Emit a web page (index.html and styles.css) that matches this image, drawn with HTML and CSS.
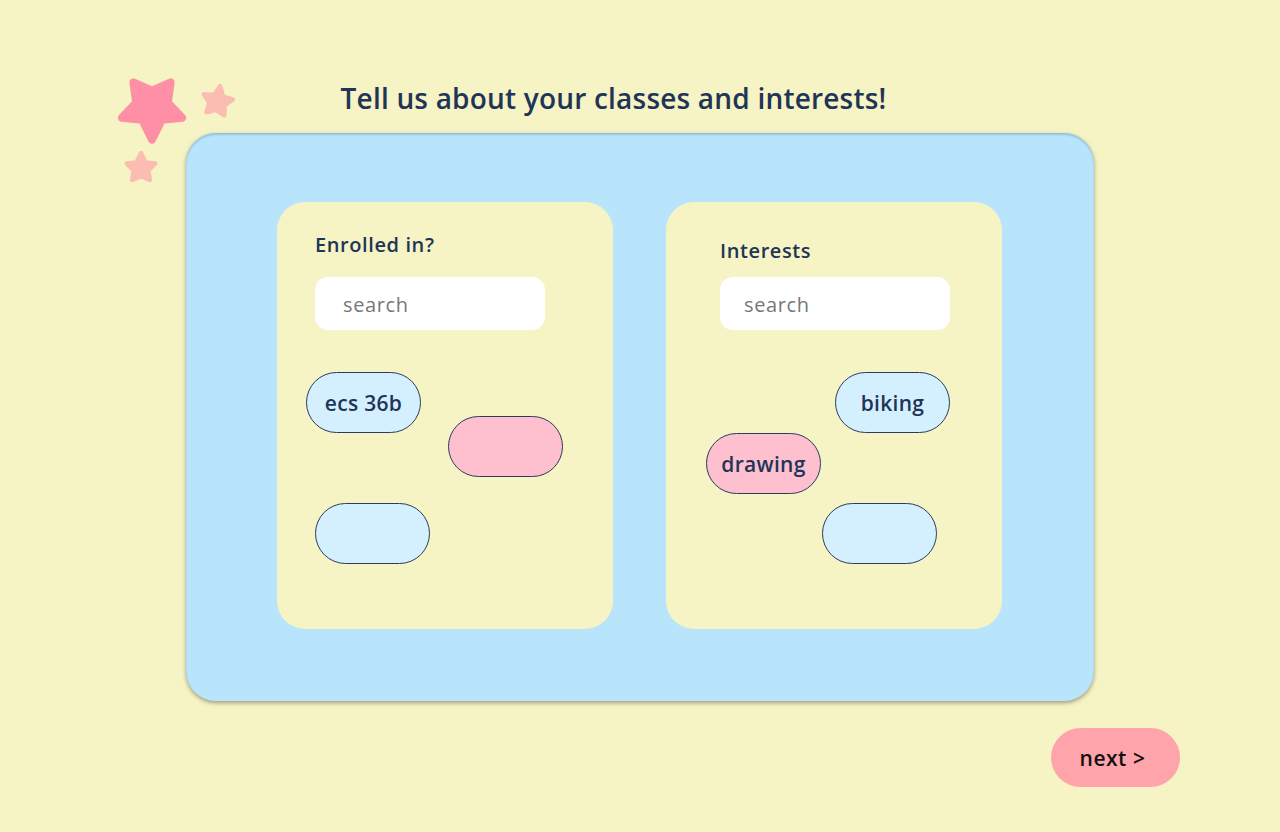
FILE: index.html
```html
<!DOCTYPE html>
<html lang="en">
<head>
<meta charset="utf-8">
<title>Tell us about your classes and interests</title>
<link rel="stylesheet" href="styles.css">
</head>
<body>
<div class="page">
  <div class="stars">
    <svg class="star star-big" viewBox="0 0 100 100"><path d="M50 94 L36.5 66.5 L8.2 63.6 L28 42.5 L24.1 14.4 L50 26 L75.9 14.4 L72 42.5 L91.8 63.6 L63.5 66.5 Z" fill="#ff8fa5" stroke="#ff8fa5" stroke-width="11" stroke-linejoin="round"/></svg>
    <svg class="star star-s1" viewBox="0 0 100 100"><path transform="rotate(190 50 50)" d="M50 94 L36.5 66.5 L8.2 63.6 L28 42.5 L24.1 14.4 L50 26 L75.9 14.4 L72 42.5 L91.8 63.6 L63.5 66.5 Z" fill="#fbbcb2" stroke="#fbbcb2" stroke-width="13" stroke-linejoin="round"/></svg>
    <svg class="star star-s2" viewBox="0 0 100 100"><path transform="rotate(180 50 50)" d="M50 94 L36.5 66.5 L8.2 63.6 L28 42.5 L24.1 14.4 L50 26 L75.9 14.4 L72 42.5 L91.8 63.6 L63.5 66.5 Z" fill="#fbbcb2" stroke="#fbbcb2" stroke-width="13" stroke-linejoin="round"/></svg>
  </div>
  <h1 class="title">Tell us about your classes and interests!</h1>
  <main class="board">
    <section class="panel">
      <h2 class="label">Enrolled in?</h2>
      <div class="search">search</div>
      <div class="field">
        <span class="pill blue p-a">ecs 36b</span>
        <span class="pill pink p-b"></span>
        <span class="pill blue p-c"></span>
      </div>
    </section>
    <section class="panel panel-right">
      <h2 class="label">Interests</h2>
      <div class="search">search</div>
      <div class="field">
        <span class="pill blue p-d">biking</span>
        <span class="pill pink p-e">drawing</span>
        <span class="pill blue p-f"></span>
      </div>
    </section>
  </main>
  <div class="footer">
    <button class="next">next &gt;</button>
  </div>
</div>
</body>
</html>
```
FILE: styles.css
```css
html, body {
  margin: 0;
  padding: 0;
  background: #f6f3c4;
}
body {
  font-family: "Open Sans", Lato, sans-serif;
  color: #1f3557;
  width: 1280px;
  height: 832px;
  overflow: hidden;
}
.page {
  position: relative;
  padding: 80px 0 0 186px;
}
.stars {
  position: absolute;
  left: 0;
  top: 0;
}
.star { position: absolute; }
.star-big { left: 116px; top: 72px; width: 72px; height: 72px; }
.star-s1 { left: 200px; top: 84px; width: 35px; height: 35px; }
.star-s2 { left: 124px; top: 151px; width: 34px; height: 34px; }

.title {
  margin: 0;
  width: 855px;
  text-align: center;
  font-size: 28px;
  font-weight: 600;
  line-height: 36px;
  letter-spacing: 0.2px;
  height: 53px;
}
.board {
  width: 908px;
  height: 568px;
  box-sizing: border-box;
  background: #b8e5fc;
  border-radius: 30px;
  box-shadow: 0 2px 4px rgba(0, 0, 0, 0.35), inset 0 2px 2px rgba(90, 130, 160, 0.35);
  display: flex;
  gap: 53px;
  padding: 69px 0 0 91px;
}
.panel {
  width: 336px;
  height: 427px;
  box-sizing: border-box;
  background: #f6f3c4;
  border-radius: 28px;
  padding: 30px 0 0 38px;
  display: flex;
  flex-direction: column;
}
.panel-right { padding-left: 54px; padding-top: 36px; }
.label {
  margin: 0;
  font-size: 20px;
  font-weight: 600;
  line-height: 26px;
  letter-spacing: 0.6px;
  height: 45px;
}
.panel-right .label { height: 39px; }
.search {
  width: 230px;
  height: 53px;
  box-sizing: border-box;
  background: #fff;
  border-radius: 13px;
  padding-left: 28px;
  font-size: 20px;
  line-height: 55px;
  letter-spacing: 0.6px;
  color: #777;
  font-weight: 500;
}
.panel-right .search { padding-left: 24px; }
.field {
  position: relative;
  flex: 1;
}
.pill {
  position: absolute;
  width: 115px;
  height: 61px;
  box-sizing: border-box;
  border: 1px solid #2a3d5e;
  border-radius: 31px;
  display: flex;
  align-items: center;
  justify-content: center;
  font-size: 21px;
  font-weight: 600;
  letter-spacing: 0.3px;
  color: #1f3557;
}
.blue { background: #d4f0ff; }
.pink { background: #fec0cf; }
.p-a { left: -9px; top: 42px; }
.p-b { left: 133px; top: 86px; }
.p-c { left: 0; top: 173px; }
.p-d { left: 115px; top: 42px; }
.p-e { left: -14px; top: 103px; }
.p-f { left: 102px; top: 173px; }

.footer {
  display: flex;
  justify-content: flex-end;
  width: 994px;
  padding-top: 27px;
}
.next {
  width: 129px;
  height: 59px;
  border: none;
  border-radius: 30px;
  background: #ffa4aa;
  color: #111;
  font-family: "Open Sans", sans-serif;
  font-size: 21px;
  font-weight: 600;
  letter-spacing: 0.5px;
  padding: 0 6px 0 0;
}
```
